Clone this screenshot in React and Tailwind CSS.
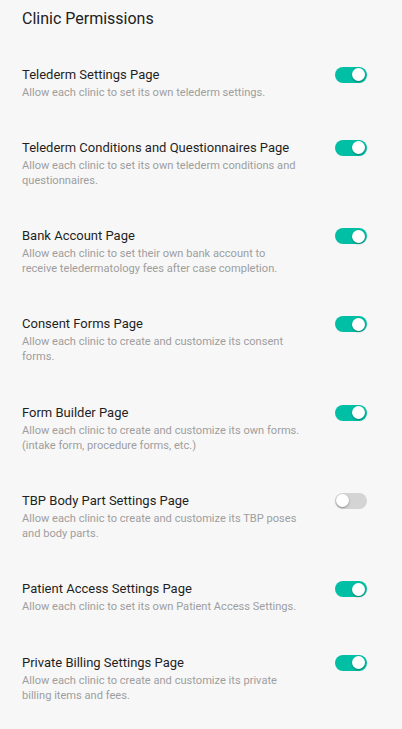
import React, { useState } from "react";

const items = [
  { title: "Telederm Settings Page", desc: "Allow each clinic to set its own telederm settings.", on: true },
  { title: "Telederm Conditions and Questionnaires Page", desc: "Allow each clinic to set its own telederm conditions and questionnaires.", on: true },
  { title: "Bank Account Page", desc: "Allow each clinic to set their own bank account to receive teledermatology fees after case completion.", on: true },
  { title: "Consent Forms Page", desc: "Allow each clinic to create and customize its consent forms.", on: true },
  { title: "Form Builder Page", desc: "Allow each clinic to create and customize its own forms. (intake form, procedure forms, etc.)", on: true },
  { title: "TBP Body Part Settings Page", desc: "Allow each clinic to create and customize its TBP poses and body parts.", on: false },
  { title: "Patient Access Settings Page", desc: "Allow each clinic to set its own Patient Access Settings.", on: true },
  { title: "Private Billing Settings Page", desc: "Allow each clinic to create and customize its private billing items and fees.", on: true },
];

const Toggle = ({ on, onClick }) => (
  <button
    onClick={onClick}
    className={`relative w-[32px] h-[16px] rounded-full flex-shrink-0 mt-[2px] ${on ? "bg-[#00bfa5]" : "bg-[#d4d4d4]"}`}
  >
    <span
      className={`absolute top-[1.5px] w-[13px] h-[13px] rounded-full bg-white shadow-[0_1px_2px_rgba(0,0,0,0.35)] ${on ? "right-[2px]" : "left-[1px]"}`}
    />
  </button>
);

const App = () => {
  const [state, setState] = useState(items.map((i) => i.on));

  return (
    <div className="min-h-screen bg-[#f7f7f7] pl-[22px] pr-[35px] pt-[8.5px] pb-6 font-['Roboto',sans-serif]">
      <h1 className="text-[16px] leading-[20px] text-[#212121] font-normal">Clinic Permissions</h1>
      <div className="mt-[36px] flex flex-col gap-[38.3px]">
        {items.map((item, i) => (
          <div key={item.title} className="flex items-start justify-between">
            <div className="w-[280px]">
              <div className="text-[13px] leading-[19px] font-normal text-[#1f1f1f]">{item.title}</div>
              <div className="mt-[1px] text-[11.1px] leading-[15px] text-[#9e9e9e]">{item.desc}</div>
            </div>
            <Toggle
              on={state[i]}
              onClick={() => setState((s) => s.map((v, j) => (j === i ? !v : v)))}
            />
          </div>
        ))}
      </div>
    </div>
  );
};

export default App;
